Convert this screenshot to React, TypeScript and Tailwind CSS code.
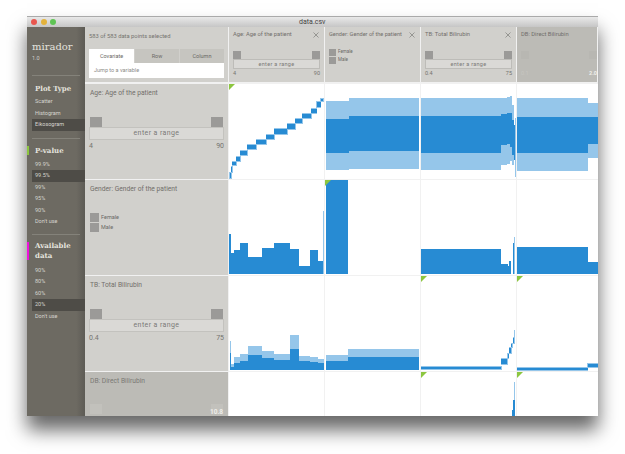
import React from 'react';

const D = '#278bd3';
const L = '#95c6ea';

type Bar = [number, number, number, number, string?];

// strip with a pale halo, as drawn in the age and bilirubin scatter cells
const strip = (x1: number, x2: number, y1: number, y2: number): Bar[] => [
  [x1 - 0.5, x2 + 0.5, y1 - 1, y2 + 1, L],
  [x1, x2, y1, y2, D],
];

const ageAge: Bar[] = [
  [229.7, 231, 173.3, 177.7], [231, 232.3, 166.7, 171.7], [232.3, 236.3, 162, 165.3],
  [236, 240.3, 156.7, 160.7], [240.3, 247, 151, 155], [247, 256.3, 145.3, 149.3],
  [256.3, 266, 140.3, 144.3], [266, 274, 135.3, 139.3], [274, 287, 129.3, 134],
  [287, 295.3, 124.3, 128.7], [295.3, 302.3, 119, 123.3], [302.3, 311, 114.3, 118],
  [311, 316.7, 108.7, 112.7], [316.7, 320.7, 102.3, 106.7], [320.7, 323, 99.3, 101.3],
].flatMap(([a, b, c, d]) => strip(a, b, c, d));

const genderAge: Bar[] = [
  [325.5, 348.5, 101.3, 170, L], [325.5, 348.5, 118.7, 152.7, D],
  [348.5, 419, 98, 169, L], [348.5, 419, 115.7, 151, D],
];

const tbAge: Bar[] = [
  [421, 501, 98.3, 170, L], [421, 501, 116, 152.7, D],
  [501, 507, 98, 165, L], [501, 507, 114, 145, D],
  [507, 510, 97, 164, L], [507, 510, 113, 144, D],
  [510, 512, 96, 161, L], [510, 512, 113, 147, D],
  [512, 514, 105, 165, L], [512, 514, 120, 155, D],
  [514, 515, 125, 160, D], [515, 516, 118, 177, L],
];

const dbAge: Bar[] = [
  [517, 587.5, 97.7, 171, L], [517, 587.5, 116.7, 153.3, D],
  [587.5, 598, 103, 157.7, L], [587.5, 598, 116.7, 144, D],
];

const ageGender: Bar[] = [
  [229, 230.5, 234, 274, D], [230.5, 234, 253.3, 274, D], [234, 239.5, 250, 274, D],
  [239.5, 248, 243.3, 274, D], [248, 261.7, 256.7, 274, D], [261.7, 273.7, 248.3, 274, D],
  [273.7, 290, 243.3, 274, D], [290, 299, 249.3, 274, D], [299, 309.7, 266, 274, D],
  [309.7, 318, 250.3, 274, D], [318, 323, 260.7, 274, D], [323, 324, 211, 274, L],
];

const genderGender: Bar[] = [[325.5, 348, 180, 274, D]];

const tbGender: Bar[] = [
  [421, 501, 249.3, 274, D], [501, 508, 264, 274, D], [508, 509, 265.7, 274, D],
  [509, 511, 261, 274, D], [513, 514, 243, 274, D], [514, 515, 237, 274, L],
];

const dbGender: Bar[] = [[517, 587.5, 247.3, 274, D], [587.5, 598, 262.3, 274, D]];

const ageTb: Bar[] = [
  [229.5, 231, 341.3, 369.5, L], [229.5, 231, 353, 369.5, D],
  [231, 234, 363.7, 369.5, L], [231, 234, 367, 369.5, D],
  [234, 239.5, 357, 369.5, L], [234, 239.5, 362.7, 369.5, D],
  [239.5, 248, 353.7, 369.5, L], [239.5, 248, 360.7, 369.5, D],
  [248, 261.7, 346, 369.5, L], [248, 261.7, 355.3, 369.5, D],
  [261.7, 273.7, 351, 369.5, L], [261.7, 273.7, 358.3, 369.5, D],
  [273.7, 290, 354, 369.5, L], [273.7, 290, 360.3, 369.5, D],
  [290, 299, 335, 369.5, L], [290, 299, 349.3, 369.5, D],
  [299, 309.7, 356, 369.5, L], [299, 309.7, 361.3, 369.5, D],
  [309.7, 318, 357, 369.5, L], [309.7, 318, 362, 369.5, D],
  [318, 323.7, 359, 369.5, L], [318, 323.7, 362.7, 369.5, D],
];

const genderTb: Bar[] = [
  [325.5, 348, 355, 369.5, L], [325.5, 348, 361.3, 369.5, D],
  [348, 419, 349.3, 369.5, L], [348, 419, 357.3, 369.5, D],
];

const tbTb: Bar[] = [
  ...strip(421, 501, 367.3, 369.3),
  ...strip(501, 507, 359, 364),
  ...strip(507.5, 508.7, 354.3, 358.3),
  ...strip(509.3, 511, 348.3, 352.7),
  ...strip(511.3, 512.3, 344.3, 346.7),
  ...strip(513, 514.3, 338.3, 343.3),
  [514, 515, 330, 336.7, L],
];

const dbTb: Bar[] = [...strip(517, 587.5, 368.3, 369.6), ...strip(587.5, 598, 364.3, 367.3)];

const tbDb: Bar[] = [
  [514, 515, 382, 416, L], [513, 514.5, 400, 416, D], [512, 513, 410, 416, D],
];

function Chart({ x, y, bars = [], mark }: { x: number; y: number; bars?: Bar[]; mark?: boolean }) {
  return (
    <div className="bg-white overflow-hidden">
      <svg width="95" height="95" viewBox={`${x} ${y} 95 95`} className="block">
        {bars.map(([a, b, c, d, f], i) => (
          <rect key={i} x={a} y={c} width={b - a} height={d - c} fill={f ?? D} shapeRendering="crispEdges" />
        ))}
        {mark && <polygon points={`${x},${y} ${x + 6},${y} ${x},${y + 6}`} fill="#8cc63f" />}
      </svg>
    </div>
  );
}

function ColumnHeader({ title, from, to, fade }: { title: string; from: string; to: string; fade?: boolean }) {
  return (
    <div className={`h-[55px] pl-[4px] pt-[4px] flex flex-col overflow-hidden ${fade ? 'w-[80px] pr-0 bg-[#bcbbb6]' : 'pr-[4px] bg-[#d1d0cc]'}`}>
      <div className="flex items-center justify-between h-[7px] text-[5.8px] leading-[7px] text-[#716f6b] whitespace-nowrap">
        <span>{title}</span>
        {!fade && (
          <svg width="6" height="6" viewBox="0 0 6 6" className="mr-[1px]">
            <path d="M0.5 0.5L5.5 5.5M5.5 0.5L0.5 5.5" stroke="#7d7c78" strokeWidth="0.7" />
          </svg>
        )}
      </div>
      <div className={`flex justify-between mt-[13px] ${fade ? 'opacity-10' : ''}`}>
        <div className="w-[8px] h-[8px] bg-[#9b9a98]" />
        <div className="w-[8px] h-[8px] bg-[#9b9a98]" />
      </div>
      <div className={`h-[10px] border border-[#bdbcb8] bg-[#dad9d6] text-center text-[5.5px] leading-[8px] tracking-[0.3px] text-[#7b7a76] ${fade ? 'opacity-0' : ''}`}>
        enter a range
      </div>
      <div className={`flex justify-between mt-[1px] text-[5.5px] leading-[7px] ${fade ? 'text-[#efeeea]' : 'text-[#75746f]'}`}>
        <span className={fade ? 'opacity-20' : ''}>{from}</span>
        <span className={fade ? 'font-bold' : ''}>{to}</span>
      </div>
    </div>
  );
}

function GenderHeader() {
  return (
    <div className="h-[55px] bg-[#d1d0cc] px-[4px] pt-[4px] flex flex-col">
      <div className="flex items-center justify-between h-[7px] text-[5.6px] leading-[7px] text-[#716f6b] whitespace-nowrap">
        <span>Gender: Gender of the patient</span>
        <svg width="6" height="6" viewBox="0 0 6 6" className="mr-[1px] shrink-0">
          <path d="M0.5 0.5L5.5 5.5M5.5 0.5L0.5 5.5" stroke="#7d7c78" strokeWidth="0.7" />
        </svg>
      </div>
      <div className="mt-[11px] flex flex-col gap-[1px]">
        {['Female', 'Male'].map((g) => (
          <div key={g} className="flex items-center gap-[2px] text-[4.5px] text-[#6a6965]">
            <div className="w-[7px] h-[7px] bg-[#9b9a98]" />
            {g}
          </div>
        ))}
      </div>
    </div>
  );
}

function RangeRow({ title, from, to }: { title: string; from: string; to: string }) {
  return (
    <div className="h-[95px] bg-[#d1d0cc] px-[4px] pt-[5px] flex flex-col">
      <div className="pl-[1px] text-[6.7px] leading-[9px] text-[#716f6b]">{title}</div>
      <div className="flex justify-between mt-[19px] pl-[1px] pr-[1px]">
        <div className="w-[12px] h-[10px] bg-[#9b9a98]" />
        <div className="w-[12px] h-[10px] bg-[#9b9a98]" />
      </div>
      <div className="h-[13px] border border-[#c3c2be] bg-[#dad9d6] text-center text-[7px] leading-[11px] tracking-[0.4px] text-[#7b7a76]">
        enter a range
      </div>
      <div className="flex justify-between mt-[2px] text-[7px] leading-[9px] text-[#75746f]">
        <span>{from}</span>
        <span>{to}</span>
      </div>
    </div>
  );
}

function SideList({ items, selected }: { items: string[]; selected: string }) {
  return (
    <div className="flex flex-col pl-[5px]">
      {items.map((t) => (
        <div
          key={t}
          className={`h-[11.5px] pl-[3px] text-[5.5px] leading-[11.5px] text-[#d6d5cf] ${t === selected ? 'bg-[#4e4c47]' : ''}`}
        >
          {t}
        </div>
      ))}
    </div>
  );
}

export default function App() {
  return (
    <div className="w-[625px] h-[454px] overflow-hidden bg-white pt-[16px] pl-[27px] font-['Roboto',sans-serif]">
      <div className="w-[571px] h-[400px] flex flex-col overflow-hidden shadow-[0_14px_18px_rgba(0,0,0,0.6)]">
        {/* Title bar */}
        <div className="relative h-[11px] shrink-0 flex items-center pl-[4px] gap-[3.5px] bg-gradient-to-b from-[#e9e9e9] to-[#c6c6c6] border-t border-[#aaa]">
          <span className="w-[6px] h-[6px] rounded-full bg-[#e8564e]" />
          <span className="w-[6px] h-[6px] rounded-full bg-[#e3b23c]" />
          <span className="w-[6px] h-[6px] rounded-full bg-[#5fc454]" />
          <span className="flex-1 text-center pr-[33px] text-[7px] text-[#444]">data.csv</span>
        </div>

        <div className="flex flex-1 min-h-0">
          {/* Sidebar */}
          <div className="w-[58px] shrink-0 bg-gradient-to-r from-[#6d6a62] from-85% to-[#5d5b55] flex flex-col">
            <div className="pl-[5px] pt-[14px]">
              <div className="font-['DejaVu_Serif',serif] text-[10px] leading-[12px] text-[#e4e3de]">mirador</div>
              <div className="text-[5.5px] leading-[7px] mt-[2px] text-[#d0cfca]">1.0</div>
            </div>
            <div className="mx-[5px] mt-[13px] h-[1px] bg-[#84827a]" />
            <div className="pl-[8px] mt-[8px] font-['DejaVu_Serif',serif] font-bold text-[7px] leading-[10px] text-[#e4e3de]">Plot Type</div>
            <div className="mt-[2px]">
              <SideList items={['Scatter', 'Histogram', 'Eikosogram']} selected="Eikosogram" />
            </div>
            <div className="mx-[5px] mt-[7px] h-[1px] bg-[#84827a]" />
            <div className="mt-[7px] flex items-center h-[10px]">
              <div className="w-[2px] h-[9px] bg-[#8cc63f]" />
              <div className="pl-[6px] font-['DejaVu_Serif',serif] font-bold text-[7px] leading-[10px] text-[#e4e3de]">P-value</div>
            </div>
            <div className="mt-[3px]">
              <SideList items={['99.9%', '99.5%', '99%', '95%', '90%', "Don't use"]} selected="99.5%" />
            </div>
            <div className="mx-[5px] mt-[6px] h-[1px] bg-[#84827a]" />
            <div className="mt-[6px] flex items-center">
              <div className="w-[2px] h-[18px] bg-[#ee12dc]" />
              <div className="pl-[6px] font-['DejaVu_Serif',serif] font-bold text-[7px] leading-[10.5px] text-[#e4e3de]">Available<br />data</div>
            </div>
            <div className="mt-[3px]">
              <SideList items={['90%', '80%', '60%', '20%', "Don't use"]} selected="20%" />
            </div>
          </div>

          {/* Matrix */}
          <div className="flex-1 min-w-0 overflow-hidden bg-[#f1f1f1]">
            <div className="grid grid-cols-[143px_95px_95px_95px_95px] grid-rows-[56px_95px_95px_95px_95px] gap-[1px] w-[523px]">
              <div className="h-[55px] bg-[#d1d0cc] px-[4px] pt-[6px]">
                <div className="text-[5.8px] leading-[7px] text-[#75746f]">583 of 583 data points selected</div>
                <div className="flex mt-[9px] text-[5.5px] text-[#6a6965] text-center">
                  <div className="w-[45px] h-[14px] leading-[14px] bg-white">Covariate</div>
                  <div className="w-[45px] h-[14px] leading-[14px] bg-[#c6c5c0] border-l border-[#d1d0cc]">Row</div>
                  <div className="w-[45px] h-[14px] leading-[14px] bg-[#c6c5c0] border-l border-[#d1d0cc]">Column</div>
                </div>
                <div className="w-[135px] h-[15px] bg-white pl-[5px] text-[5.5px] leading-[15px] text-[#8d8c88]">Jump to a variable</div>
              </div>
              <ColumnHeader title="Age: Age of the patient" from="4" to="90" />
              <GenderHeader />
              <ColumnHeader title="TB: Total Bilirubin" from="0.4" to="75" />
              <ColumnHeader title="DB: Direct Bilirubin" from="0.1" to="2.0" fade />

              <RangeRow title="Age: Age of the patient" from="4" to="90" />
              <Chart x={229} y={84} bars={ageAge} mark />
              <Chart x={325} y={84} bars={genderAge} />
              <Chart x={421} y={84} bars={tbAge} />
              <Chart x={517} y={84} bars={dbAge} />

              <div className="h-[95px] bg-[#d1d0cc] px-[4px] pt-[5px]">
                <div className="pl-[1px] text-[6.7px] leading-[9px] text-[#716f6b]">Gender: Gender of the patient</div>
                <div className="mt-[19px] flex flex-col gap-[1px] pl-[1px]">
                  {['Female', 'Male'].map((g) => (
                    <div key={g} className="flex items-center gap-[2px] text-[5.5px] text-[#6a6965]">
                      <div className="w-[9px] h-[9px] bg-[#9b9a98]" />
                      {g}
                    </div>
                  ))}
                </div>
              </div>
              <Chart x={229} y={180} bars={ageGender} />
              <Chart x={325} y={180} bars={genderGender} mark />
              <Chart x={421} y={180} bars={tbGender} />
              <Chart x={517} y={180} bars={dbGender} />

              <RangeRow title="TB: Total Bilirubin" from="0.4" to="75" />
              <Chart x={229} y={276} bars={ageTb} />
              <Chart x={325} y={276} bars={genderTb} />
              <Chart x={421} y={276} bars={tbTb} mark />
              <Chart x={517} y={276} bars={dbTb} mark />

              <div className="h-[95px] bg-[#bcbbb6] px-[4px] pt-[5px]">
                <div className="pl-[1px] text-[6.7px] leading-[9px] text-[#7a7975]">DB: Direct Bilirubin</div>
                <div className="flex justify-between mt-[18px] pl-[1px] pr-[1px]">
                  <div className="w-[12px] h-[10px] bg-[#c2c1bc]" />
                  <div className="relative w-[12px] h-[10px] bg-[#c2c1bc]">
                    <span className="absolute right-0 top-[4px] text-[6.5px] leading-[8px] font-bold text-[#efeeea]">10.8</span>
                  </div>
                </div>
              </div>
              <Chart x={229} y={372} />
              <Chart x={325} y={372} />
              <Chart x={421} y={372} bars={tbDb} mark />
              <Chart x={517} y={372} mark />
            </div>
          </div>
        </div>
      </div>
    </div>
  );
}
